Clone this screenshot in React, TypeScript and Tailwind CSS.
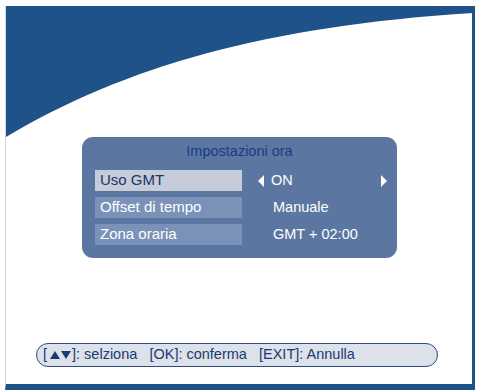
import React from "react";

const ROWS = [
    { label: "Uso GMT", value: "ON", active: true },
    { label: "Offset di tempo", value: "Manuale", active: false },
    { label: "Zona oraria", value: "GMT + 02:00", active: false },
];

function Swoosh() {
    return (
        <svg className="absolute left-0 top-0" width="467" height="140" viewBox="0 0 467 140">
            <path d="M0,131 C120,60 260,20 467,7 L467,0 L0,0 Z" fill="#1f5289" />
        </svg>
    );
}

export default function App() {
    return (
        <div className="w-[478px] h-[390px] bg-white pt-[6px] pl-[5px]" style={{ fontFamily: '"Liberation Sans", Arial, sans-serif' }}>
            <div className="relative w-[470px] h-[384px] border-l border-[#d4d6da] border-r-[3px] border-r-[#1f5289] border-b-[6px] border-b-[#1f5289] flex flex-col">
                <Swoosh />
                <div className="relative mt-[131px] ml-[76px] w-[315px] h-[121px] rounded-[11px] bg-[#5b77a1] flex flex-col">
                    <div className="h-[28px] flex items-center justify-center text-[14.5px] text-[#1b3b82] pt-[2px]">
                        Impostazioni ora
                    </div>
                    <div className="flex flex-col gap-[6px] mt-[5px] pl-[13px]">
                        {ROWS.map((r) => (
                            <div key={r.label} className="flex items-center h-[21px]">
                                <div
                                    className={`w-[147px] h-full flex items-center pl-[5px] text-[15px] ${r.active ? "bg-[#c6ccd9] text-[#1c3566]" : "bg-[#7b92b8] text-white"}`}
                                >
                                    {r.label}
                                </div>
                                <div className="flex items-center flex-1 text-[14.5px] text-white pl-[16px] pr-[10px]">
                                    {r.active ? (
                                        <>
                                            <span className="w-0 h-0 border-y-[6px] border-y-transparent border-r-[6px] border-r-white mr-[7px]" />
                                            <span>{r.value}</span>
                                            <span className="ml-auto w-0 h-0 border-y-[6px] border-y-transparent border-l-[6px] border-l-white" />
                                        </>
                                    ) : (
                                        <span className="pl-[15px]">{r.value}</span>
                                    )}
                                </div>
                            </div>
                        ))}
                    </div>
                </div>
                <div className="relative mt-auto mb-[17px] ml-[30px] w-[402px] h-[24px] rounded-full border-[1.5px] border-[#2b4a7e] bg-[#dde1ea] flex items-center pl-[6px] text-[14.5px] text-[#1b3a70] whitespace-pre">
                    <span>[</span>
                    <span className="ml-[3px] w-0 h-0 border-x-[5px] border-x-transparent border-b-[8px] border-b-[#1b3a70]" />
                    <span className="ml-[1px] mr-[1px] w-0 h-0 border-x-[5px] border-x-transparent border-t-[8px] border-t-[#1b3a70]" />
                    <span>]: selziona   [OK]: conferma   [EXIT]: Annulla</span>
                </div>
            </div>
        </div>
    );
}
